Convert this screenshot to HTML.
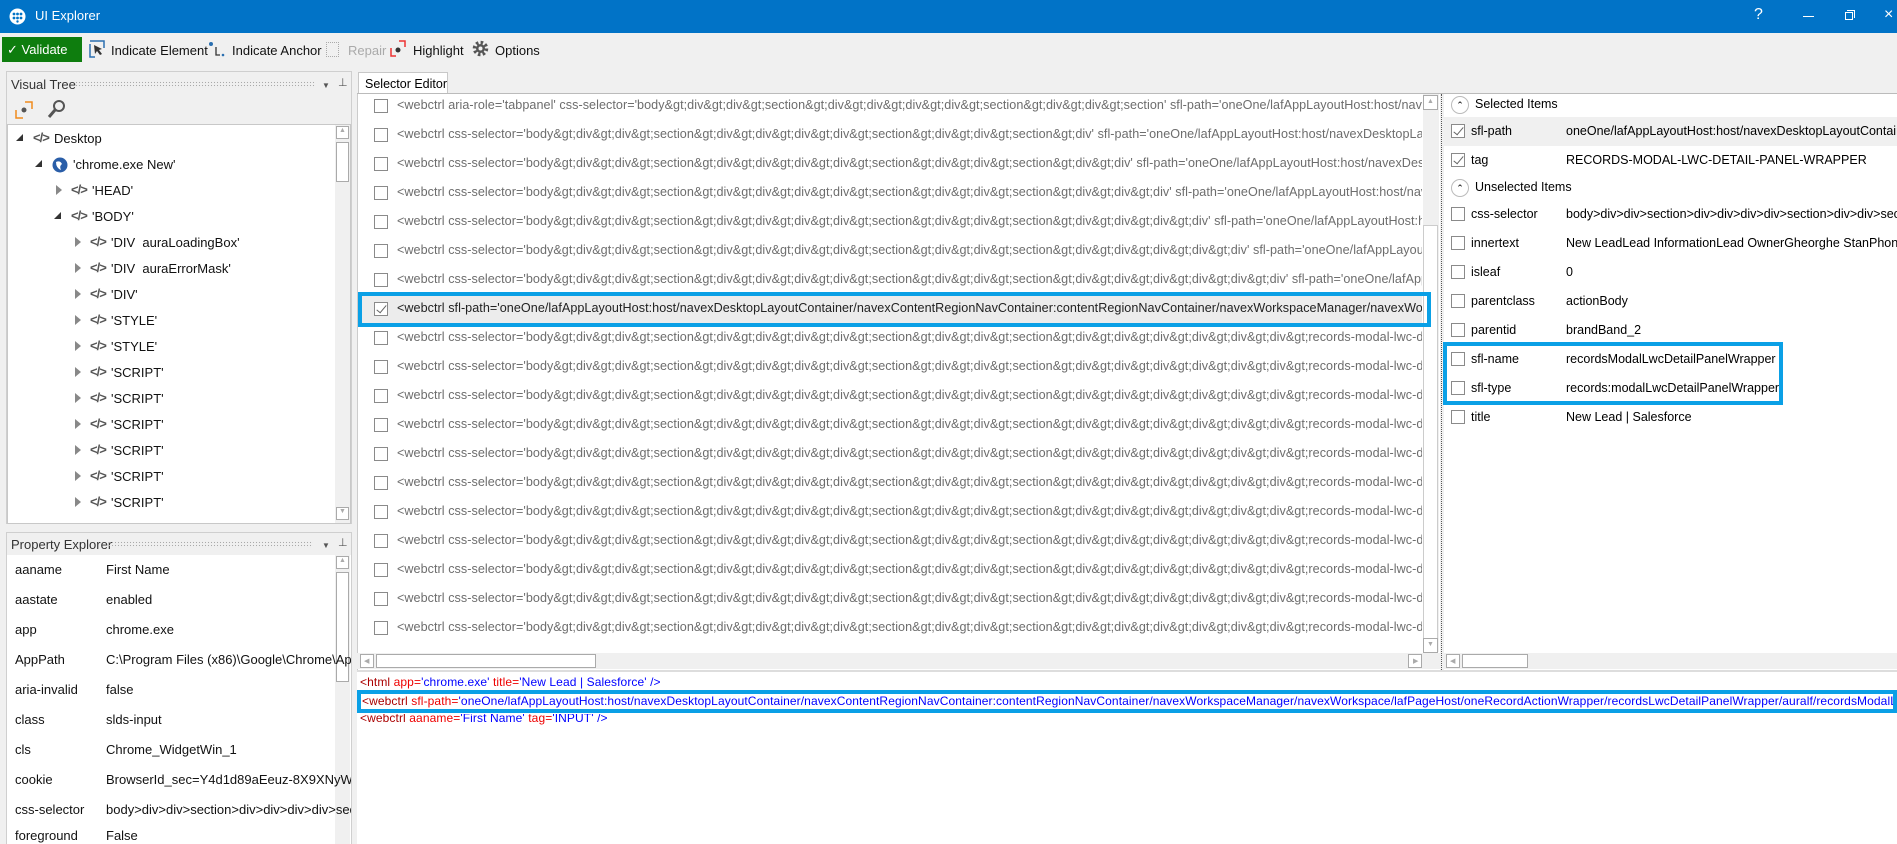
<!DOCTYPE html>
<html><head><meta charset="utf-8">
<style>
*{box-sizing:border-box;margin:0;padding:0}
body{width:1897px;height:844px;overflow:hidden;background:#f0f0f0;font-family:"Liberation Sans",sans-serif;font-size:12px;color:#000;position:relative}
.abs{position:absolute}
.title{left:0;top:0;width:1897px;height:33px;background:#0173c7;color:#fff}
.tb{font-size:13px;color:#111}
.panel{background:#fff;border:1px solid #c8c8c8}
.hdr{font-size:13px;color:#333}
.dots{position:absolute;height:7px;background-image:radial-gradient(#aaa 0.6px,transparent 0.8px);background-size:3px 3px}
.cb{position:absolute;width:14px;height:14px;border:1px solid #8a8a8a;background:#fff}
.row{position:absolute;left:358px;width:1064px;height:29px;white-space:nowrap;overflow:hidden;color:#6d6d6d;font-size:12.6px;letter-spacing:0.05px}
.row .cb{left:16px;top:7px}
.row span{position:absolute;left:39px;top:6px}
.tr{position:absolute;white-space:nowrap;font-size:13px;color:#111}
.tri{position:absolute;width:0;height:0;border-top:5px solid transparent;border-bottom:5px solid transparent;border-left:6px solid #888}
.tri.o{border-left-color:transparent;border-top:0;border-bottom:7px solid #333;border-left:7px solid transparent}
.code{position:absolute;font-size:13px;color:#555;font-weight:bold;letter-spacing:-1px}
.pr{position:absolute;left:15px;font-size:13px;color:#111;white-space:nowrap}
.pr b{font-weight:normal;position:absolute;left:91px;width:245px;overflow:hidden}
.rr{position:absolute;left:1444px;width:453px;height:29px;font-size:12.5px;white-space:nowrap;overflow:hidden}
.rr .cb{left:7px;top:7px}
.rr .n{position:absolute;left:27px;top:7px}
.rr .v{position:absolute;left:122px;top:7px}
.chk::after{content:"";position:absolute;left:4px;top:0px;width:4px;height:9px;border:solid #666;border-width:0 1.5px 1.5px 0;transform:rotate(40deg)}
.x{position:absolute;font-size:12px;white-space:nowrap;letter-spacing:0.1px;overflow:hidden}
.r{color:#e00}.bl{color:#00f}.br{color:#a00}
</style></head><body>
<div class="abs title">
 <svg class="abs" style="left:9px;top:8px" width="17" height="17" viewBox="0 0 17 17"><circle cx="8.5" cy="8.5" r="8" fill="#fff"/><g fill="#0173c7"><circle cx="5" cy="6" r="1.4"/><circle cx="8.5" cy="6" r="1.4"/><circle cx="12" cy="6" r="1.4"/><circle cx="5" cy="10" r="1.4"/><circle cx="8.5" cy="10" r="1.4"/><circle cx="12" cy="10" r="1.4"/><circle cx="8.5" cy="13.5" r="1.2"/></g></svg>
 <div class="abs" style="left:35px;top:8px;font-size:13px">UI Explorer</div>
 <div class="abs" style="left:1754px;top:6px;font-size:16px">?</div>
 <div class="abs" style="left:1803px;top:16px;width:11px;height:1px;background:#fff"></div>
 <div class="abs" style="left:1845px;top:12px;width:8px;height:8px;border:1px solid #fff"></div>
 <div class="abs" style="left:1847px;top:10px;width:8px;height:8px;border-top:1px solid #fff;border-right:1px solid #fff"></div>
 <div class="abs" style="left:1884px;top:6px;font-size:16px">×</div>
</div>
<!-- toolbar -->
<div class="abs" style="left:2px;top:37px;width:80px;height:25px;background:#0e7d0e;color:#fff;font-size:13px;padding:5px 0 0 5px">✓ Validate</div>
<svg class="abs" style="left:89px;top:40px" width="16" height="18"><path d="M1 4V17H6M1 1H15V8" stroke="#2a6fb0" fill="none" stroke-width="1.5"/><path d="M5 5L13 9L10 10L13 14L11 15L8 11L6 14Z" fill="#333"/></svg>
<div class="abs tb" style="left:111px;top:43px">Indicate Element</div>
<svg class="abs" style="left:208px;top:41px" width="18" height="18"><circle cx="3" cy="3" r="2" fill="#2a6fb0"/><path d="M8 6V14H12" stroke="#333" fill="none" stroke-width="1.3"/><circle cx="15" cy="14" r="1.3" fill="#2a6fb0"/></svg>
<div class="abs tb" style="left:232px;top:43px">Indicate Anchor</div>
<div class="abs" style="left:326px;top:42px;width:13px;height:15px;border:1px dotted #aaa"></div>
<div class="abs tb" style="left:348px;top:43px;color:#aaa">Repair</div>
<svg class="abs" style="left:390px;top:40px" width="16" height="18"><path d="M1 8V16H6M9 1H15V7" stroke="#e33" fill="none" stroke-width="1.5"/><circle cx="8" cy="10" r="2.5" fill="#333"/></svg>
<div class="abs tb" style="left:413px;top:43px">Highlight</div>
<svg class="abs" style="left:472px;top:40px" width="17" height="17" viewBox="0 0 17 17"><circle cx="8.5" cy="8.5" r="6" fill="none" stroke="#555" stroke-width="3.5" stroke-dasharray="2.5 2.2"/><circle cx="8.5" cy="8.5" r="4.5" fill="#555"/><circle cx="8.5" cy="8.5" r="2" fill="#f0f0f0"/></svg>
<div class="abs tb" style="left:495px;top:43px">Options</div>

<!-- Visual tree -->
<div class="abs" style="left:6px;top:71px;width:346px;height:453px;border:1px solid #cfcfcf;background:#f0f0f0"></div>
<div class="abs hdr" style="left:11px;top:77px">Visual Tree</div>
<div class="dots" style="left:75px;top:81px;width:240px"></div>
<div class="abs" style="left:322px;top:81px;font-size:8px;color:#555">▼</div>
<div class="abs" style="left:338px;top:76px;font-size:11px;color:#555">⊥</div>
<svg class="abs" style="left:15px;top:101px" width="18" height="18"><path d="M1 9V17H8M10 1H17V8" stroke="#f08a1c" fill="none" stroke-width="1.5"/><circle cx="9" cy="9" r="2.5" fill="#555"/></svg>
<svg class="abs" style="left:47px;top:99px" width="20" height="20"><circle cx="12" cy="7" r="5" fill="none" stroke="#555" stroke-width="2"/><path d="M8 11L2 18" stroke="#555" stroke-width="3"/></svg>
<div class="abs panel" style="left:7px;top:124px;width:344px;height:400px"></div>
<div class="abs" style="left:335px;top:125px;width:15px;height:398px;background:#f0f0f0"></div>
<div class="abs" style="left:336px;top:126px;width:13px;height:13px;border:1px solid #aaa;background:#fff;font-size:7px;color:#aaa;text-align:center">▲</div>
<div class="abs" style="left:336px;top:142px;width:13px;height:40px;border:1px solid #aaa;background:#fff"></div>
<div class="abs" style="left:336px;top:507px;width:13px;height:13px;border:1px solid #aaa;background:#fff;font-size:7px;color:#aaa;text-align:center">▼</div>

<div class="tri o" style="left:16px;top:134px"></div><div class="code" style="left:33px;top:130px">&lt;/&gt;</div><div class="tr" style="left:54px;top:131px">Desktop</div>
<div class="tri o" style="left:35px;top:160px"></div>
<svg class="abs" style="left:52px;top:157px" width="16" height="16"><circle cx="8" cy="8" r="7.5" fill="#2a5ea8"/><path d="M4 5Q8 3 10 7Q7 9 9 13Q4 11 4 5Z" fill="#fff"/></svg>
<div class="tr" style="left:73px;top:157px">'chrome.exe New'</div>
<div class="tri" style="left:56px;top:185px"></div><div class="code" style="left:71px;top:182px">&lt;/&gt;</div><div class="tr" style="left:92px;top:183px">'HEAD'</div>
<div class="tri o" style="left:54px;top:212px"></div><div class="code" style="left:71px;top:208px">&lt;/&gt;</div><div class="tr" style="left:92px;top:209px">'BODY'</div>
<div class="tri" style="left:75px;top:237px"></div><div class="code" style="left:90px;top:234px">&lt;/&gt;</div><div class="tr" style="left:111px;top:235px">'DIV &nbsp;auraLoadingBox'</div>
<div class="tri" style="left:75px;top:263px"></div><div class="code" style="left:90px;top:260px">&lt;/&gt;</div><div class="tr" style="left:111px;top:261px">'DIV &nbsp;auraErrorMask'</div>
<div class="tri" style="left:75px;top:289px"></div><div class="code" style="left:90px;top:286px">&lt;/&gt;</div><div class="tr" style="left:111px;top:287px">'DIV'</div>
<div class="tri" style="left:75px;top:315px"></div><div class="code" style="left:90px;top:312px">&lt;/&gt;</div><div class="tr" style="left:111px;top:313px">'STYLE'</div>
<div class="tri" style="left:75px;top:341px"></div><div class="code" style="left:90px;top:338px">&lt;/&gt;</div><div class="tr" style="left:111px;top:339px">'STYLE'</div>
<div class="tri" style="left:75px;top:367px"></div><div class="code" style="left:90px;top:364px">&lt;/&gt;</div><div class="tr" style="left:111px;top:365px">'SCRIPT'</div>
<div class="tri" style="left:75px;top:393px"></div><div class="code" style="left:90px;top:390px">&lt;/&gt;</div><div class="tr" style="left:111px;top:391px">'SCRIPT'</div>
<div class="tri" style="left:75px;top:419px"></div><div class="code" style="left:90px;top:416px">&lt;/&gt;</div><div class="tr" style="left:111px;top:417px">'SCRIPT'</div>
<div class="tri" style="left:75px;top:445px"></div><div class="code" style="left:90px;top:442px">&lt;/&gt;</div><div class="tr" style="left:111px;top:443px">'SCRIPT'</div>
<div class="tri" style="left:75px;top:471px"></div><div class="code" style="left:90px;top:468px">&lt;/&gt;</div><div class="tr" style="left:111px;top:469px">'SCRIPT'</div>
<div class="tri" style="left:75px;top:497px"></div><div class="code" style="left:90px;top:494px">&lt;/&gt;</div><div class="tr" style="left:111px;top:495px">'SCRIPT'</div>

<!-- Property explorer -->
<div class="abs" style="left:6px;top:532px;width:346px;height:312px;border:1px solid #cfcfcf;background:#f0f0f0"></div>
<div class="abs hdr" style="left:11px;top:537px">Property Explorer</div>
<div class="dots" style="left:108px;top:541px;width:205px"></div>
<div class="abs" style="left:322px;top:541px;font-size:8px;color:#555">▼</div>
<div class="abs" style="left:338px;top:536px;font-size:11px;color:#555">⊥</div>
<div class="abs" style="left:7px;top:555px;width:344px;height:289px;background:#fff"></div>
<div class="abs" style="left:335px;top:555px;width:15px;height:289px;background:#f0f0f0"></div>
<div class="abs" style="left:336px;top:556px;width:13px;height:13px;border:1px solid #aaa;background:#fff;font-size:7px;color:#aaa;text-align:center">▲</div>
<div class="abs" style="left:336px;top:572px;width:13px;height:110px;border:1px solid #aaa;background:#fff"></div>
<div class="pr" style="top:562px">aaname<b>First Name</b></div>
<div class="pr" style="top:592px">aastate<b>enabled</b></div>
<div class="pr" style="top:622px">app<b>chrome.exe</b></div>
<div class="pr" style="top:652px">AppPath<b>C:\Program Files (x86)\Google\Chrome\Application</b></div>
<div class="pr" style="top:682px">aria-invalid<b>false</b></div>
<div class="pr" style="top:712px">class<b>slds-input</b></div>
<div class="pr" style="top:742px">cls<b>Chrome_WidgetWin_1</b></div>
<div class="pr" style="top:772px">cookie<b>BrowserId_sec=Y4d1d89aEeuz-8X9XNyWmQ</b></div>
<div class="pr" style="top:802px">css-selector<b>body&gt;div&gt;div&gt;section&gt;div&gt;div&gt;div&gt;div&gt;section</b></div>
<div class="pr" style="top:828px">foreground<b>False</b></div>

<!-- selector editor -->
<div class="abs" style="left:358px;top:72px;width:90px;height:22px;background:#fff;border:1px solid #c8c8c8;border-bottom:none;font-size:12.5px;padding:4px 0 0 6px">Selector Editor</div>
<div class="abs" style="left:357px;top:93px;width:1540px;height:1px;background:#bbb"></div>
<div class="abs" style="left:357px;top:94px;width:1083px;height:576px;background:#fff;border-left:1px solid #ccc"></div>
<div class="abs" style="left:1423px;top:94px;width:16px;height:558px;background:#f0f0f0"></div>
<div class="abs" style="left:1423px;top:95px;width:15px;height:15px;border:1px solid #aaa;background:#fff;font-size:7px;color:#aaa;text-align:center;padding-top:2px">▲</div>
<div class="abs" style="left:1423px;top:225px;width:15px;height:416px;border:1px solid #ccc;background:#fff"></div>
<div class="abs" style="left:1423px;top:638px;width:15px;height:15px;border:1px solid #aaa;background:#fff;font-size:7px;color:#aaa;text-align:center;padding-top:2px">▼</div>
<div class="abs" style="left:357px;top:653px;width:1083px;height:16px;background:#f0f0f0"></div>
<div class="abs" style="left:360px;top:654px;width:14px;height:14px;border:1px solid #aaa;background:#fff;font-size:7px;color:#aaa;padding:2px 0 0 3px">◀</div>
<div class="abs" style="left:376px;top:654px;width:220px;height:14px;border:1px solid #aaa;background:#fff"></div>
<div class="abs" style="left:1408px;top:654px;width:14px;height:14px;border:1px solid #aaa;background:#fff;font-size:7px;color:#aaa;padding:2px 0 0 4px">▶</div>

<div class="row" style="top:92px"><div class="cb"></div><span>&lt;webctrl aria-role='tabpanel' css-selector='body&amp;gt;div&amp;gt;div&amp;gt;section&amp;gt;div&amp;gt;div&amp;gt;div&amp;gt;div&amp;gt;section&amp;gt;div&amp;gt;div&amp;gt;section' sfl-path='oneOne/lafAppLayoutHost:host/navexDesktopLayoutContainer/navexContentRegionNavContainer'</span></div>
<div class="row" style="top:121px"><div class="cb"></div><span>&lt;webctrl css-selector='body&amp;gt;div&amp;gt;div&amp;gt;section&amp;gt;div&amp;gt;div&amp;gt;div&amp;gt;div&amp;gt;section&amp;gt;div&amp;gt;div&amp;gt;section&amp;gt;div' sfl-path='oneOne/lafAppLayoutHost:host/navexDesktopLayoutContainer/navex'</span></div>
<div class="row" style="top:150px"><div class="cb"></div><span>&lt;webctrl css-selector='body&amp;gt;div&amp;gt;div&amp;gt;section&amp;gt;div&amp;gt;div&amp;gt;div&amp;gt;div&amp;gt;section&amp;gt;div&amp;gt;div&amp;gt;section&amp;gt;div&amp;gt;div' sfl-path='oneOne/lafAppLayoutHost:host/navexDesktopLayout'</span></div>
<div class="row" style="top:179px"><div class="cb"></div><span>&lt;webctrl css-selector='body&amp;gt;div&amp;gt;div&amp;gt;section&amp;gt;div&amp;gt;div&amp;gt;div&amp;gt;div&amp;gt;section&amp;gt;div&amp;gt;div&amp;gt;section&amp;gt;div&amp;gt;div&amp;gt;div' sfl-path='oneOne/lafAppLayoutHost:host/navexDesktop'</span></div>
<div class="row" style="top:208px"><div class="cb"></div><span>&lt;webctrl css-selector='body&amp;gt;div&amp;gt;div&amp;gt;section&amp;gt;div&amp;gt;div&amp;gt;div&amp;gt;div&amp;gt;section&amp;gt;div&amp;gt;div&amp;gt;section&amp;gt;div&amp;gt;div&amp;gt;div&amp;gt;div' sfl-path='oneOne/lafAppLayoutHost:host/nav'</span></div>
<div class="row" style="top:237px"><div class="cb"></div><span>&lt;webctrl css-selector='body&amp;gt;div&amp;gt;div&amp;gt;section&amp;gt;div&amp;gt;div&amp;gt;div&amp;gt;div&amp;gt;section&amp;gt;div&amp;gt;div&amp;gt;section&amp;gt;div&amp;gt;div&amp;gt;div&amp;gt;div&amp;gt;div' sfl-path='oneOne/lafAppLayoutHost:host'</span></div>
<div class="row" style="top:266px"><div class="cb"></div><span>&lt;webctrl css-selector='body&amp;gt;div&amp;gt;div&amp;gt;section&amp;gt;div&amp;gt;div&amp;gt;div&amp;gt;div&amp;gt;section&amp;gt;div&amp;gt;div&amp;gt;section&amp;gt;div&amp;gt;div&amp;gt;div&amp;gt;div&amp;gt;div&amp;gt;div' sfl-path='oneOne/lafAppLayou'</span></div>
<div class="row" style="top:295px;background:#ececec;color:#222"><div class="cb chk"></div><span>&lt;webctrl sfl-path='oneOne/lafAppLayoutHost:host/navexDesktopLayoutContainer/navexContentRegionNavContainer:contentRegionNavContainer/navexWorkspaceManager/navexWorkspace/lafPageHost'</span></div>
<div class="abs" style="left:358px;top:292px;width:1073px;height:35px;border:4px solid #0aa0e6"></div>
<div class="row" style="top:324px"><div class="cb"></div><span>&lt;webctrl css-selector='body&amp;gt;div&amp;gt;div&amp;gt;section&amp;gt;div&amp;gt;div&amp;gt;div&amp;gt;div&amp;gt;section&amp;gt;div&amp;gt;div&amp;gt;section&amp;gt;div&amp;gt;div&amp;gt;div&amp;gt;div&amp;gt;div&amp;gt;div&amp;gt;records-modal-lwc-detail</span></div>
<div class="row" style="top:353px"><div class="cb"></div><span>&lt;webctrl css-selector='body&amp;gt;div&amp;gt;div&amp;gt;section&amp;gt;div&amp;gt;div&amp;gt;div&amp;gt;div&amp;gt;section&amp;gt;div&amp;gt;div&amp;gt;section&amp;gt;div&amp;gt;div&amp;gt;div&amp;gt;div&amp;gt;div&amp;gt;div&amp;gt;records-modal-lwc-detail</span></div>
<div class="row" style="top:382px"><div class="cb"></div><span>&lt;webctrl css-selector='body&amp;gt;div&amp;gt;div&amp;gt;section&amp;gt;div&amp;gt;div&amp;gt;div&amp;gt;div&amp;gt;section&amp;gt;div&amp;gt;div&amp;gt;section&amp;gt;div&amp;gt;div&amp;gt;div&amp;gt;div&amp;gt;div&amp;gt;div&amp;gt;records-modal-lwc-detail</span></div>
<div class="row" style="top:411px"><div class="cb"></div><span>&lt;webctrl css-selector='body&amp;gt;div&amp;gt;div&amp;gt;section&amp;gt;div&amp;gt;div&amp;gt;div&amp;gt;div&amp;gt;section&amp;gt;div&amp;gt;div&amp;gt;section&amp;gt;div&amp;gt;div&amp;gt;div&amp;gt;div&amp;gt;div&amp;gt;div&amp;gt;records-modal-lwc-detail</span></div>
<div class="row" style="top:440px"><div class="cb"></div><span>&lt;webctrl css-selector='body&amp;gt;div&amp;gt;div&amp;gt;section&amp;gt;div&amp;gt;div&amp;gt;div&amp;gt;div&amp;gt;section&amp;gt;div&amp;gt;div&amp;gt;section&amp;gt;div&amp;gt;div&amp;gt;div&amp;gt;div&amp;gt;div&amp;gt;div&amp;gt;records-modal-lwc-detail</span></div>
<div class="row" style="top:469px"><div class="cb"></div><span>&lt;webctrl css-selector='body&amp;gt;div&amp;gt;div&amp;gt;section&amp;gt;div&amp;gt;div&amp;gt;div&amp;gt;div&amp;gt;section&amp;gt;div&amp;gt;div&amp;gt;section&amp;gt;div&amp;gt;div&amp;gt;div&amp;gt;div&amp;gt;div&amp;gt;div&amp;gt;records-modal-lwc-detail</span></div>
<div class="row" style="top:498px"><div class="cb"></div><span>&lt;webctrl css-selector='body&amp;gt;div&amp;gt;div&amp;gt;section&amp;gt;div&amp;gt;div&amp;gt;div&amp;gt;div&amp;gt;section&amp;gt;div&amp;gt;div&amp;gt;section&amp;gt;div&amp;gt;div&amp;gt;div&amp;gt;div&amp;gt;div&amp;gt;div&amp;gt;records-modal-lwc-detail</span></div>
<div class="row" style="top:527px"><div class="cb"></div><span>&lt;webctrl css-selector='body&amp;gt;div&amp;gt;div&amp;gt;section&amp;gt;div&amp;gt;div&amp;gt;div&amp;gt;div&amp;gt;section&amp;gt;div&amp;gt;div&amp;gt;section&amp;gt;div&amp;gt;div&amp;gt;div&amp;gt;div&amp;gt;div&amp;gt;div&amp;gt;records-modal-lwc-detail</span></div>
<div class="row" style="top:556px"><div class="cb"></div><span>&lt;webctrl css-selector='body&amp;gt;div&amp;gt;div&amp;gt;section&amp;gt;div&amp;gt;div&amp;gt;div&amp;gt;div&amp;gt;section&amp;gt;div&amp;gt;div&amp;gt;section&amp;gt;div&amp;gt;div&amp;gt;div&amp;gt;div&amp;gt;div&amp;gt;div&amp;gt;records-modal-lwc-detail</span></div>
<div class="row" style="top:585px"><div class="cb"></div><span>&lt;webctrl css-selector='body&amp;gt;div&amp;gt;div&amp;gt;section&amp;gt;div&amp;gt;div&amp;gt;div&amp;gt;div&amp;gt;section&amp;gt;div&amp;gt;div&amp;gt;section&amp;gt;div&amp;gt;div&amp;gt;div&amp;gt;div&amp;gt;div&amp;gt;div&amp;gt;records-modal-lwc-detail</span></div>
<div class="row" style="top:614px"><div class="cb"></div><span>&lt;webctrl css-selector='body&amp;gt;div&amp;gt;div&amp;gt;section&amp;gt;div&amp;gt;div&amp;gt;div&amp;gt;div&amp;gt;section&amp;gt;div&amp;gt;div&amp;gt;section&amp;gt;div&amp;gt;div&amp;gt;div&amp;gt;div&amp;gt;div&amp;gt;div&amp;gt;records-modal-lwc-detail</span></div>

<!-- splitter -->
<div class="abs" style="left:1441px;top:94px;width:2px;height:576px;border-left:1px dotted #555"></div>

<!-- right panel -->
<div class="abs" style="left:1444px;top:94px;width:453px;height:576px;background:#fff"></div>
<div class="abs" style="left:1444px;top:653px;width:453px;height:16px;background:#f0f0f0"></div>
<div class="abs" style="left:1446px;top:654px;width:14px;height:14px;border:1px solid #aaa;background:#fff;font-size:7px;color:#aaa;padding:2px 0 0 3px">◀</div>
<div class="abs" style="left:1462px;top:654px;width:66px;height:14px;border:1px solid #aaa;background:#fff"></div>
<div class="abs" style="left:1451px;top:96px;width:18px;height:18px;border:1px solid #bbb;border-radius:50%;font-size:9px;text-align:center;line-height:16px">⌃</div>
<div class="abs" style="left:1475px;top:97px;font-size:12.5px">Selected Items</div>
<div class="rr" style="top:117px;background:#f0f0f0"><div class="cb chk"></div><div class="n">sfl-path</div><div class="v">oneOne/lafAppLayoutHost:host/navexDesktopLayoutContainer/navexContentRegionNavContainer</div></div>
<div class="rr" style="top:146px"><div class="cb chk"></div><div class="n">tag</div><div class="v">RECORDS-MODAL-LWC-DETAIL-PANEL-WRAPPER</div></div>
<div class="abs" style="left:1451px;top:179px;width:18px;height:18px;border:1px solid #bbb;border-radius:50%;font-size:9px;text-align:center;line-height:16px">⌃</div>
<div class="abs" style="left:1475px;top:180px;font-size:12.5px">Unselected Items</div>
<div class="rr" style="top:200px"><div class="cb"></div><div class="n">css-selector</div><div class="v">body&gt;div&gt;div&gt;section&gt;div&gt;div&gt;div&gt;div&gt;section&gt;div&gt;div&gt;section</div></div>
<div class="rr" style="top:229px"><div class="cb"></div><div class="n">innertext</div><div class="v">New LeadLead InformationLead OwnerGheorghe StanPhone*Name</div></div>
<div class="rr" style="top:258px"><div class="cb"></div><div class="n">isleaf</div><div class="v">0</div></div>
<div class="rr" style="top:287px"><div class="cb"></div><div class="n">parentclass</div><div class="v">actionBody</div></div>
<div class="rr" style="top:316px"><div class="cb"></div><div class="n">parentid</div><div class="v">brandBand_2</div></div>
<div class="rr" style="top:345px"><div class="cb"></div><div class="n">sfl-name</div><div class="v">recordsModalLwcDetailPanelWrapper</div></div>
<div class="rr" style="top:374px"><div class="cb"></div><div class="n">sfl-type</div><div class="v">records:modalLwcDetailPanelWrapper</div></div>
<div class="rr" style="top:403px"><div class="cb"></div><div class="n">title</div><div class="v">New Lead | Salesforce</div></div>
<div class="abs" style="left:1443px;top:342px;width:340px;height:63px;border:4px solid #0aa0e6"></div>

<!-- bottom xml -->
<div class="abs" style="left:357px;top:670px;width:1540px;height:2px;background:#ddd"></div>
<div class="abs" style="left:357px;top:672px;width:1540px;height:172px;background:#fff"></div>
<div class="x" style="left:360px;top:675px"><span class="br">&lt;html</span> <span class="r">app=</span><span class="bl">'chrome.exe'</span> <span class="r">title=</span><span class="bl">'New Lead | Salesforce'</span> <span class="bl">/&gt;</span></div>
<div class="abs" style="left:357px;top:690px;width:1540px;height:23px;border:4px solid #0aa0e6"></div>
<div class="x" style="left:362px;top:694px;width:1531px"><span class="br">&lt;webctrl</span> <span class="r">sfl-path=</span><span class="bl">'oneOne/lafAppLayoutHost:host/navexDesktopLayoutContainer/navexContentRegionNavContainer:contentRegionNavContainer/navexWorkspaceManager/navexWorkspace/lafPageHost/oneRecordActionWrapper/recordsLwcDetailPanelWrapper/auralf/recordsModalLwcDetailPanelWrapper'</span></div>
<div class="x" style="left:360px;top:711px;clip-path:inset(3px 0 0 0)"><span class="br">&lt;webctrl</span> <span class="r">aaname=</span><span class="bl">'First Name'</span> <span class="r">tag=</span><span class="bl">'INPUT'</span> <span class="bl">/&gt;</span></div>
</body></html>
